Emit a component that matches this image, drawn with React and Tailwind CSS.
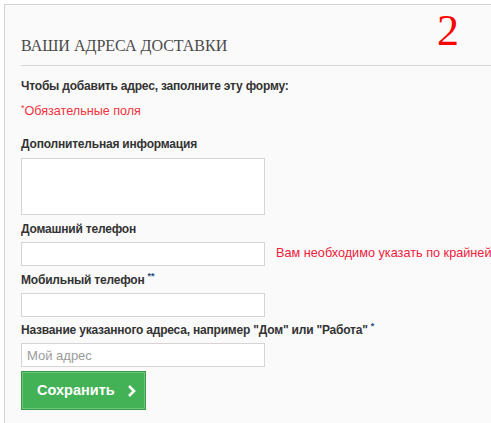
import React from "react";

const Label = ({ children }) => (
  <label className="block h-[16px] text-[12px] tracking-[-0.2px] font-bold text-[#333] leading-[16px] whitespace-nowrap">
    {children}
  </label>
);

const Star = ({ children }) => (
  <span className="relative top-[-5px] ml-[3px] text-[9px] leading-none tracking-normal text-[#2a4a7a]">
    {children}
  </span>
);

const Input = ({ placeholder }) => (
  <input
    type="text"
    placeholder={placeholder}
    className="block shrink-0 w-[244px] h-[24px] border border-[#d6d4d4] bg-white px-[5px] text-[13px] text-[#333] placeholder:text-[#9c9b9b] outline-none"
  />
);

export default function App() {
  return (
    <div className="min-h-screen bg-white pl-[4px] pt-[4px] font-['Liberation_Sans',Arial,sans-serif] overflow-hidden">
      <div className="relative min-h-[419px] border-l border-t border-[#d6d4d4] bg-[#fafafa] pl-[16px] pb-[15px] overflow-hidden">
        <span className="absolute left-[432px] top-[0px] font-['Liberation_Serif',serif] text-[44px] leading-[52px] text-[#ff0000]">
          2
        </span>

        <h1 className="border-b border-[#d6d4d4] pt-[30px] pb-[9px] font-['Liberation_Serif',serif] text-[16px] leading-[21px] text-[#4a4a4a] uppercase">
          Ваши адреса доставки
        </h1>

        <p className="mt-[12px] h-[16px] text-[12px] tracking-[-0.2px] font-bold leading-[16px] text-[#333]">
          Чтобы добавить адрес, заполните эту форму:
        </p>
        <p className="mt-[9px] h-[16px] text-[12.6px] leading-[16px] text-[#f13340]">
          <span className="relative top-[-4px] text-[9px] leading-none">*</span>
          Обязательные поля
        </p>

        <form className="mt-[17px] flex flex-col">
          <Label>Дополнительная информация</Label>
          <textarea className="mt-[6px] block w-[244px] h-[57px] border border-[#d6d4d4] bg-white resize-none outline-none" />

          <div className="mt-[6px]">
            <Label>Домашний телефон</Label>
          </div>
          <div className="mt-[5px] flex items-center">
            <Input />
            <span className="ml-[11px] whitespace-nowrap text-[12.7px] text-[#f0203a]">
              Вам необходимо указать по крайней мере один номер телефона
            </span>
          </div>

          <div className="mt-[6px]">
            <Label>
              Мобильный телефон<Star>**</Star>
            </Label>
          </div>
          <div className="mt-[5px]">
            <Input />
          </div>

          <div className="mt-[5px]">
            <Label>
              Название указанного адреса, например "Дом" или "Работа"<Star>*</Star>
            </Label>
          </div>
          <div className="mt-[5px]">
            <Input placeholder="Мой адрес" />
          </div>

          <div className="mt-[4px]">
            <button
              type="button"
              className="flex items-center h-[39px] w-[125px] border border-[#399a49] bg-[#43b155] pl-[15px] text-[14.5px] font-bold text-white shadow-[inset_0_0_0_1px_#6bc877]"
            >
              Сохранить
              <svg width="10" height="14" viewBox="0 0 10 14" className="ml-[12px]">
                <path d="M2 2 L7 7 L2 12" fill="none" stroke="white" strokeWidth="2.6" />
              </svg>
            </button>
          </div>
        </form>
      </div>
    </div>
  );
}
